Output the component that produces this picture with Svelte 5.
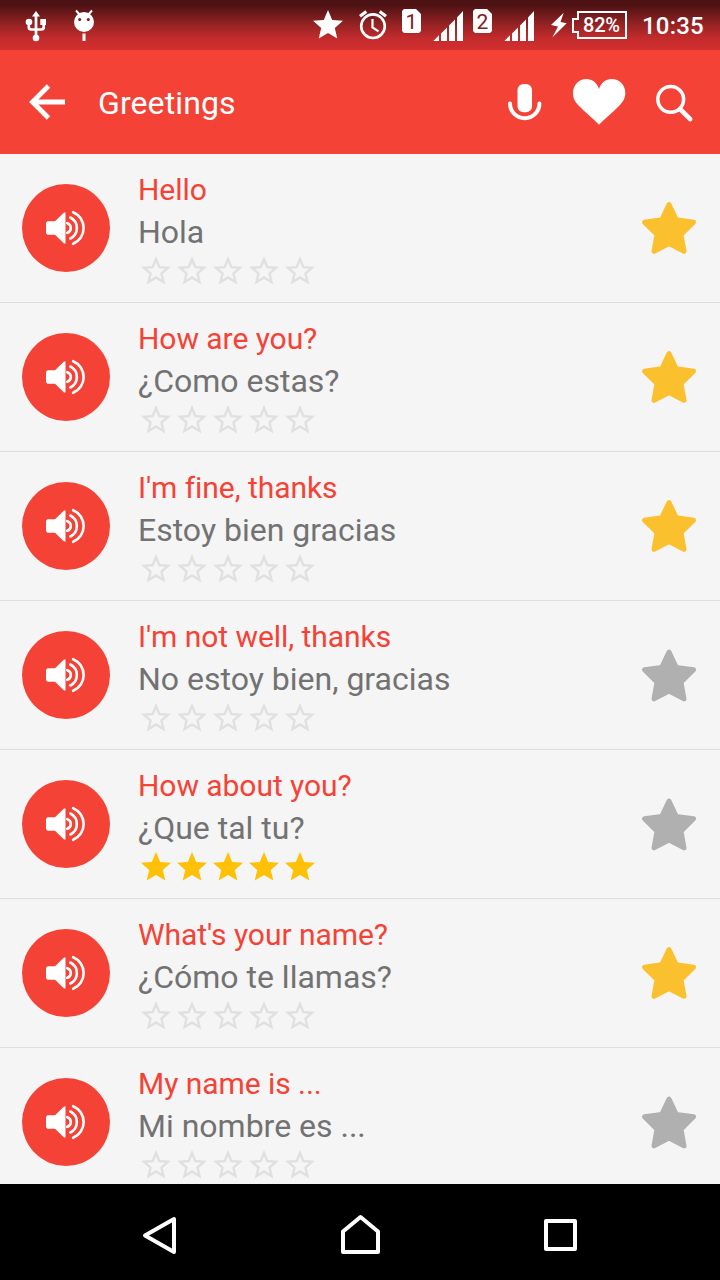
<script>
  const phrases = [
    { text: 'Hello', translation: 'Hola', rating: 0, favorite: true },
    { text: 'How are you?', translation: '¿Como estas?', rating: 0, favorite: true },
    { text: "I'm fine, thanks", translation: 'Estoy bien gracias', rating: 0, favorite: true },
    { text: "I'm not well, thanks", translation: 'No estoy bien, gracias', rating: 0, favorite: false },
    { text: 'How about you?', translation: '¿Que tal tu?', rating: 5, favorite: false },
    { text: "What's your name?", translation: '¿Cómo te llamas?', rating: 0, favorite: true },
    { text: 'My name is ...', translation: 'Mi nombre es ...', rating: 0, favorite: false }
  ];
  const starFull = 'M12 17.27L18.18 21l-1.64-7.03L22 9.24l-7.19-.61L12 2 9.19 8.63 2 9.24l5.46 4.73L5.82 21z';
  const starOutline = 'M22 9.24l-7.19-.62L12 2 9.19 8.63 2 9.24l5.46 4.73L5.82 21 12 17.27 18.18 21l-1.63-7.03L22 9.24zM12 15.4l-3.76 2.27 1-4.28-3.32-2.88 4.38-.38L12 6.1l1.71 4.04 4.38.38-3.32 2.88 1 4.28L12 15.4z';
</script>

{#snippet sim(n)}
  <svg width="28" height="50" viewBox="0 0 28 50">
    <path d="M5 9h12l5 5v17l-2 2H5l-2-2V11z" fill="#fff" />
    <text x="12.3" y="29" text-anchor="middle" class="sim-number">{n}</text>
  </svg>
{/snippet}

{#snippet signal()}
  <svg width="34" height="50" viewBox="0 0 34 50">
    <path d="M1.300 41L7 35.300V41zM9 41V33.500L15 27.500V41zM17 41V25.500L23 19.500V41zM25 41V17.500L31 11V41z" fill="#fff" />
  </svg>
{/snippet}

<div class="screen">
  <div class="status">
    <svg width="28" height="50" viewBox="22 0 28 50" fill="#fff">
      <path d="M36 11l4 5.500h-8z" />
      <path d="M36 15v23M28.800 22v5q0 2.500 2.500 2.500h10q2.400 0 2.400-2.500v-5" fill="none" stroke="#fff" stroke-width="2.700" />
      <circle cx="29" cy="22" r="3.300" /><path d="M40.300 19h5.700v6h-5.700z" /><circle cx="36" cy="38" r="3.300" />
    </svg>
    <svg class="debug" width="28" height="50" viewBox="70 0 28 50" fill="#fff">
      <path d="M76 10.500l4 4.500M92 10.500l-4 4.500" stroke="#fff" stroke-width="2" />
      <circle cx="84" cy="22" r="10" />
      <path d="M82.500 33.500h3V41h-3z" />
      <circle cx="79.700" cy="19.500" r="1.500" fill="#7d1d1f" /><circle cx="88.300" cy="19.500" r="1.500" fill="#7d1d1f" />
    </svg>
    <div class="status-right">
      <svg width="46" height="50" viewBox="310 0 46 50" fill="#fff">
        <path transform="translate(310 7) scale(1.5)" d={starFull} />
      </svg>
      <svg width="43" height="50" viewBox="356 0 43 50" fill="none" stroke="#fff">
        <circle cx="373" cy="26.200" r="11.800" stroke-width="2.600" />
        <path d="M360 16.300l6.300-4.800M386 16.300l-6.300-4.800" stroke-width="3.200" />
        <path d="M372.500 19v8.300l6 4" stroke-width="2.200" />
      </svg>
      {@render sim(1)}
      <span class="signal-gap"></span>
      {@render signal()}
      <span class="sim-gap"></span>
      {@render sim(2)}
      <span class="signal-gap"></span>
      {@render signal()}
      <svg class="bolt" width="20" height="50" viewBox="549 0 20 50">
        <path d="M563.700 12.700L551 25l7 1.500-5.700 11L566.700 23.300l-6.200-1.300z" fill="#fff" />
      </svg>
      <svg width="60" height="50" viewBox="569 0 60 50">
        <path d="M578 12h48v26h-48v-6h-5V19h5z" fill="none" stroke="#fff" stroke-width="2" />
        <text x="583" y="32.300" textLength="37" class="battery">82%</text>
      </svg>
      <span class="clock">10:35</span>
    </div>
  </div>

  <header>
    <svg width="98" height="104" viewBox="0 50 98 104">
      <path d="M65 102H33M48.500 86L32.500 102l16 16" fill="none" stroke="#fff" stroke-width="4.800" />
    </svg>
    <h1>Greetings</h1>
    <svg width="50" height="104" viewBox="500 50 50 104">
      <rect x="517.500" y="84" width="14.500" height="28.300" rx="6" fill="#fff" />
      <path d="M510 103.500a14.700 14.700 0 0 0 29.400 0" fill="none" stroke="#fff" stroke-width="4" stroke-linecap="round" />
    </svg>
    <svg width="96" height="104" viewBox="550 50 96 104">
      <path d="M599 124.700C593 118.500 585 112.500 578 105C574 100.500 573 97 573 93C573 85 579 79 586.500 79C592 79 597 82.500 599 89C601 82.500 606 79 611.500 79C619.500 79 625.300 85 625.300 93C625.300 97 624 100.500 620 105C613 112.500 605 118.500 599 124.700z" fill="#fff" />
    </svg>
    <svg width="74" height="104" viewBox="646 50 74 104" fill="none" stroke="#fff">
      <circle cx="670.700" cy="99.300" r="12.900" stroke-width="3.500" />
      <path d="M680.500 109.500l9.700 9.700" stroke-width="4.600" stroke-linecap="round" />
    </svg>
  </header>

  <main>
    {#each phrases as p}
      <div class="row">
        <div class="play">
          <svg width="88" height="88" viewBox="22 184 88 88">
            <path d="M47.500 221.300H55L64 212.500h1.500v31H64L55 234.700h-7.500l-1.500-1.500v-10.400z" fill="#fff" />
            <path d="M67.300 223.200a5.040 5.040 0 0 1 0 9.600M70.300 217.500a11.700 11.700 0 0 1 0 21M73.100 212.200a17.100 17.100 0 0 1 0 31.600" fill="none" stroke="#fff" stroke-width="2.600" stroke-linecap="round" />
          </svg>
        </div>
        <div class="body">
          <div class="text">{p.text}</div>
          <div class="translation">{p.translation}</div>
          <div class="rating">
            {#each [1, 2, 3, 4, 5] as n}
              <svg width="36" height="36" viewBox="0 0 24 24">
                <path d={n <= p.rating ? starFull : starOutline} fill={n <= p.rating ? '#ffc107' : '#e0e0e0'} />
              </svg>
            {/each}
          </div>
        </div>
        <svg class="favorite" class:on={p.favorite} width="60" height="60" viewBox={p.favorite ? '639 198 60 60' : '639 197.4 60 60'}>
          <path d="M669 204.500L676.200 219.800L693.500 222.200L681 234.600L684 251.300L669 243.500L654 251.300L657 234.600L644.500 222.200L661.800 219.800z" stroke-width="5" stroke-linejoin="round" />
        </svg>
      </div>
    {/each}
  </main>

  <nav>
    <svg width="60" height="60" viewBox="130 1205 60 60"><path d="M174 1219v33L145 1235.500z" /></svg>
    <svg width="60" height="60" viewBox="330 1205 60 60"><path d="M343 1252v-20.500l17.500-14.500 17.500 14.500V1252z" /></svg>
    <svg width="60" height="60" viewBox="530 1205 60 60"><path d="M546 1221h29v28h-29z" /></svg>
  </nav>
</div>

<style>
  :global(body) { margin: 0; }
  .screen {
    width: 720px;
    height: 1280px;
    display: flex;
    flex-direction: column;
    overflow: hidden;
    background: #f5f5f5;
    font-family: Roboto, sans-serif;
  }
  svg { display: block; flex: none; }
  .status {
    flex: none;
    height: 50px;
    display: flex;
    padding-left: 22px;
    background: linear-gradient(#4a1113 0, #4d1214 10%, #8e2122 45%, #c12b2c 75%, #d32f2f 100%);
    color: #fff;
  }
  .debug { margin-left: 20px; }
  .status-right { margin-left: auto; display: flex; }
  .signal-gap { width: 5px; }
  .sim-gap { width: 4px; }
  .bolt { margin-left: 12px; }
  .sim-number { font-size: 21px; font-weight: 400; fill: #80201f; }
  .battery { font-size: 20px; font-weight: 500; fill: #fff; }
  .clock { width: 91px; box-sizing: border-box; padding-left: 13px; font-size: 24px; font-weight: 500; line-height: 52px; letter-spacing: 0.2px; }
  header { flex: none; height: 104px; display: flex; background: #f44336; color: #fff; }
  h1 { flex: 1; margin: 0; font-size: 32px; font-weight: 400; line-height: 106px; letter-spacing: 0.1px; }
  main { flex: 1; min-height: 0; overflow: hidden; }
  .row {
    height: 149px;
    box-sizing: border-box;
    border-bottom: 1px solid #dedede;
    display: flex;
    padding-left: 22px;
  }
  .play { width: 88px; height: 88px; margin-top: 30px; border-radius: 50%; background: #f44336; }
  .body { flex: 1; padding: 16px 0 0 28px; white-space: nowrap; }
  .text { height: 41px; line-height: 40px; font-size: 30px; letter-spacing: -0.05px; color: #f44336; }
  .translation { height: 42px; line-height: 42px; font-size: 32px; color: #727272; }
  .rating { display: flex; }
  .favorite { margin: 44px 21px 0 0; fill: #b0b0b0; stroke: #b0b0b0; }
  .favorite.on { fill: #fbc02d; stroke: #fbc02d; }
  nav { flex: none; height: 96px; display: flex; justify-content: center; gap: 140px; padding-top: 21px; box-sizing: border-box; background: #000; }
  nav path { fill: none; stroke: #fff; stroke-width: 4; stroke-linejoin: round; }
</style>
